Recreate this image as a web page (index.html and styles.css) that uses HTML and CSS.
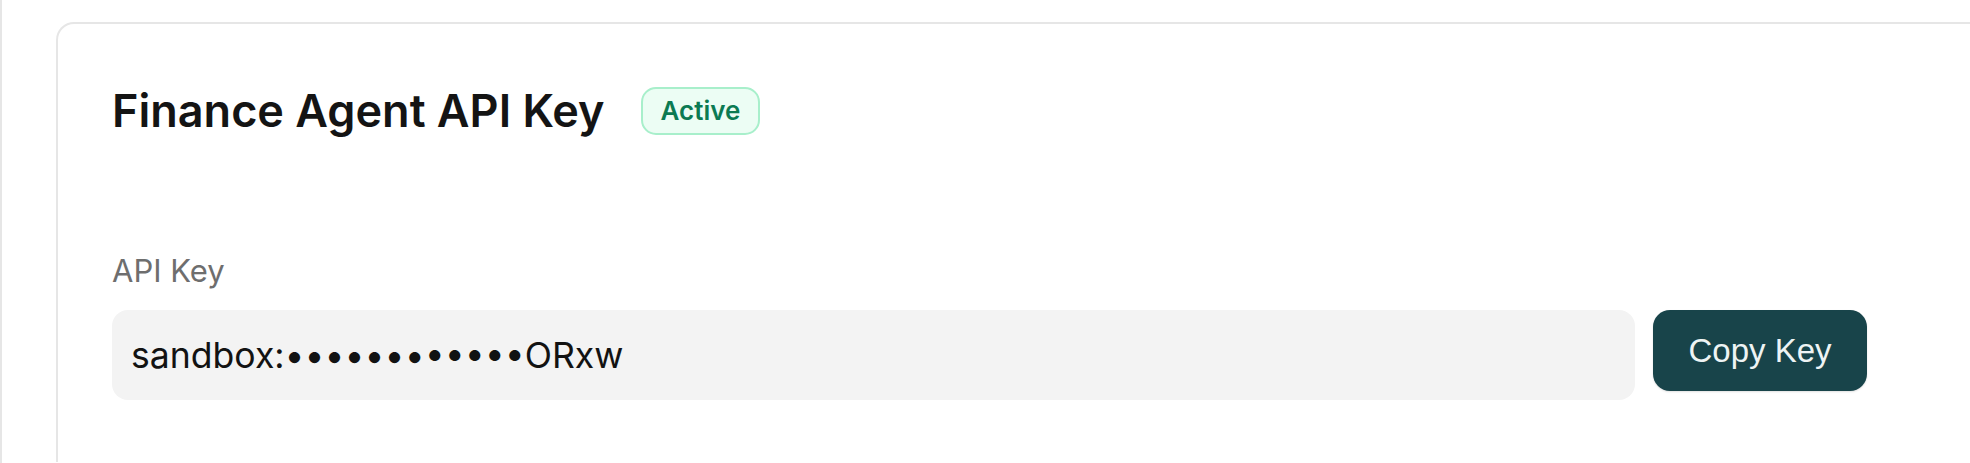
FILE: index.html
```html
<!DOCTYPE html>
<html lang="en">
<head>
<meta charset="utf-8">
<title>Finance Agent API Key</title>
<link rel="stylesheet" href="styles.css">
</head>
<body>
<div class="shell">
  <main class="main">
    <section class="card">
      <div class="card-head">
        <h1 class="title">Finance Agent API Key</h1>
        <span class="badge">Active</span>
      </div>
      <div class="field">
        <label class="field-label">API Key</label>
        <div class="key-row">
          <div class="key-box">sandbox:••••••••••••ORxw</div>
          <button class="copy-btn" type="button">Copy Key</button>
        </div>
      </div>
    </section>
  </main>
</div>
</body>
</html>
```

FILE: styles.css
```css
html, body {
  margin: 0;
  padding: 0;
  background: #ffffff;
  overflow: hidden;
  height: 100%;
}

.shell {
  height: 100%;
  border-left: 2px solid #e6e6e6;
  font-family: Inter, "Noto Sans", sans-serif;
  color: #111111;
}

.main {
  padding: 22px 0 0 54px;
}

.card {
  margin-right: -30px;
  border: 2px solid #e6e6e6;
  border-bottom: none;
  border-radius: 18px 18px 0 0;
  background: #ffffff;
  padding: 59px 131px 0 54px;
  height: 440px;
  box-sizing: border-box;
}

.card-head {
  display: flex;
  align-items: center;
  gap: 36px;
}

.title {
  margin: 0;
  font-size: 45px;
  font-weight: 600;
  line-height: normal;
  color: #141414;
}

.badge {
  display: inline-flex;
  align-items: center;
  justify-content: center;
  box-sizing: border-box;
  height: 48px;
  padding: 0 18px;
  border: 2px solid #a8efcb;
  border-radius: 15px;
  background: #ecfdf4;
  color: #0b7a52;
  font-size: 26px;
  font-weight: 600;
}

.field {
  margin-top: 114px;
}

.field-label {
  display: block;
  font-size: 31px;
  line-height: normal;
  color: #6e6e6e;
  margin-bottom: 21px;
}

.key-row {
  display: flex;
  align-items: flex-start;
  gap: 18px;
}

.key-box {
  flex: 1;
  box-sizing: border-box;
  height: 90px;
  display: flex;
  align-items: center;
  padding: 0 19px;
  background: #f3f3f3;
  border-radius: 16px;
  font-size: 35.6px;
  color: #121212;
}

.copy-btn {
  box-sizing: border-box;
  width: 214px;
  height: 81px;
  border: none;
  border-radius: 17px;
  background: #18444a;
  color: #eef4f4;
  font-family: "Liberation Sans", Arial, sans-serif;
  font-size: 33px;
  box-shadow: 0 1px 2px rgba(0,0,0,0.12);
  cursor: pointer;
}
```
